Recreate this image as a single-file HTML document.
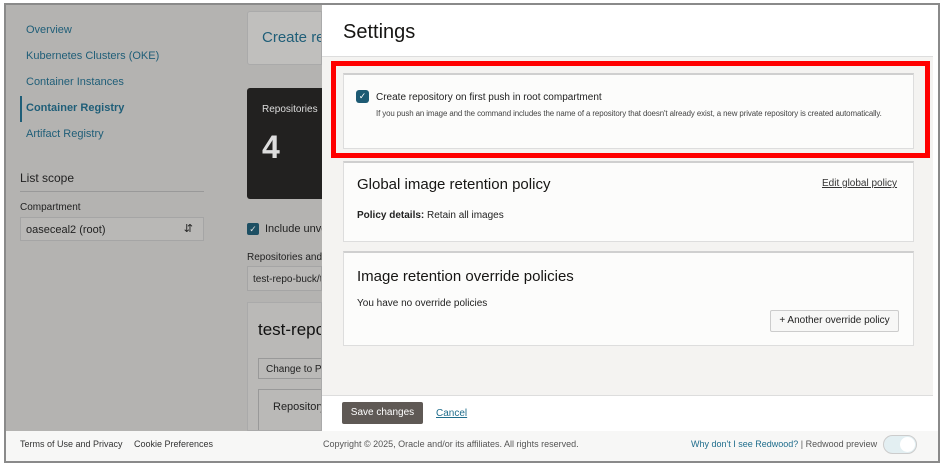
<!DOCTYPE html>
<html><head><style>
*{box-sizing:border-box;margin:0;padding:0}
body{width:942px;height:466px;background:#fff;font-family:"Liberation Sans",sans-serif;position:relative;overflow:hidden}
.frame{position:absolute;left:4px;top:3px;width:936px;height:460px;border:2px solid #8a8a8a}
.a{position:absolute}
.bg{left:6px;top:5px;width:316px;height:426px;background:#b4b3b1}
.nav{font-size:11px;color:#1f5e78}
.drawer{left:322px;top:5px;width:611px;height:426px;background:#f4f3f1}
.card{position:absolute;left:343px;width:571px;background:#fcfcfb;border:1px solid #ddd;border-top:2px solid #cfcfcf}
</style></head><body>
<div class="a bg"></div>
<div class="a nav" style="left:26px;top:24px">Overview</div>
<div class="a nav" style="left:26px;top:50px">Kubernetes Clusters (OKE)</div>
<div class="a nav" style="left:26px;top:76px">Container Instances</div>
<div class="a" style="left:20px;top:96px;width:2px;height:26px;background:#1f5e78"></div>
<div class="a nav" style="left:26px;top:102px;font-weight:bold">Container Registry</div>
<div class="a nav" style="left:26px;top:128px">Artifact Registry</div>
<div class="a" style="left:20px;top:171px;font-size:12px;color:#222">List scope</div>
<div class="a" style="left:20px;top:191px;width:184px;height:1px;background:#999"></div>
<div class="a" style="left:20px;top:202px;font-size:10px;color:#222">Compartment</div>
<div class="a" style="left:20px;top:217px;width:184px;height:24px;border:1px solid #a5a5a5;background:#b9b8b6;font-size:11px;color:#222;padding:6px 5px">oaseceal2 (root)<span style="position:absolute;right:10px;top:4px;font-size:11px">&#8693;</span></div>
<div class="a" style="left:247px;top:11px;width:75px;height:54px;background:#c0bfbd;border:1px solid #aaa;border-radius:3px 0 0 3px;font-size:15px;color:#1f5e78;padding:17px 0 0 14px;overflow:hidden;white-space:nowrap">Create re</div>
<div class="a" style="left:247px;top:88px;width:75px;height:111px;background:#222120;border-radius:3px 0 0 3px;color:#ddd;overflow:hidden;white-space:nowrap"><div style="font-size:10px;padding:16px 0 0 15px">Repositories</div><div style="font-size:32px;font-weight:bold;padding:14px 0 0 15px;color:#ddd">4</div></div>
<div class="a" style="left:247px;top:223px;width:12px;height:12px;background:#1d4f63;border-radius:2px;color:#ddd;font-size:9px;text-align:center;line-height:12px">&#10003;</div>
<div class="a" style="left:265px;top:223px;font-size:11px;color:#222;white-space:nowrap;width:57px;overflow:hidden">Include unverified</div>
<div class="a" style="left:247px;top:252px;font-size:10px;color:#222;width:75px;overflow:hidden;white-space:nowrap">Repositories and images</div>
<div class="a" style="left:247px;top:266px;width:75px;height:25px;border:1px solid #a5a5a5;background:#b9b8b6;font-size:10px;color:#222;padding:7px 0 0 5px;overflow:hidden;white-space:nowrap">test-repo-buck/test</div>
<div class="a" style="left:247px;top:302px;width:75px;height:129px;background:#bab9b7;border:1px solid #aaa;overflow:hidden;white-space:nowrap">
<div style="font-size:17px;color:#111;padding:17px 0 0 10px">test-repo</div>
<div style="position:absolute;left:10px;top:55px;width:70px;height:21px;border:1px solid #999;font-size:10px;padding:5px 0 0 7px;color:#222">Change to Public</div>
<div style="position:absolute;left:10px;top:86px;width:70px;height:50px;border:1px solid #999;font-size:11px;padding:11px 0 0 14px;color:#222">Repository</div>
</div>
<div class="a drawer"></div>
<div class="a" style="left:322px;top:5px;width:611px;height:52px;background:#fff;border-bottom:1px solid #ddd"></div>
<div class="a" style="left:343px;top:21px;font-size:20px;color:#161513">Settings</div>
<div class="a" style="left:331px;top:61px;width:599px;height:97px;border:5px solid #f00"></div>
<div class="card" style="top:73px;height:76px"></div>
<div class="a" style="left:356px;top:90px;width:13px;height:13px;background:#1d5a73;border-radius:3px;color:#fff;font-size:9px;text-align:center;line-height:13px">&#10003;</div>
<div class="a" style="left:376px;top:92px;font-size:10px;color:#222">Create repository on first push in root compartment</div>
<div class="a" style="left:376px;top:109px;font-size:7.9px;color:#444;white-space:nowrap;letter-spacing:-0.1px">If you push an image and the command includes the name of a repository that doesn't already exist, a new private repository is created automatically.</div>
<div class="card" style="top:161px;height:81px"></div>
<div class="a" style="left:357px;top:176px;font-size:15px;color:#161513">Global image retention policy</div>
<div class="a" style="left:822px;top:178px;font-size:10px;color:#333;text-decoration:underline">Edit global policy</div>
<div class="a" style="left:357px;top:210px;font-size:10px;color:#222"><b>Policy details:</b> Retain all images</div>
<div class="card" style="top:251px;height:95px"></div>
<div class="a" style="left:357px;top:268px;font-size:15px;color:#161513">Image retention override policies</div>
<div class="a" style="left:357px;top:298px;font-size:10px;color:#222">You have no override policies</div>
<div class="a" style="left:770px;top:310px;width:129px;height:22px;border:1px solid #ccc;border-radius:2px;background:#f7f7f6;font-size:10px;color:#222;text-align:center;line-height:20px">+ Another override policy</div>
<div class="a" style="left:322px;top:395px;width:611px;height:36px;background:#fff;border-top:1px solid #ddd"></div>
<div class="a" style="left:342px;top:402px;width:81px;height:22px;background:#5f5955;border-radius:2px;color:#fff;font-size:10px;text-align:center;line-height:22px">Save changes</div>
<div class="a" style="left:436px;top:408px;font-size:10px;color:#1f6d8c;text-decoration:underline">Cancel</div>
<div class="a" style="left:6px;top:431px;width:933px;height:30px;background:#f7f7f6"></div>
<div class="a" style="left:20px;top:439px;font-size:9px;color:#333">Terms of Use and Privacy</div>
<div class="a" style="left:134px;top:439px;font-size:9px;color:#333">Cookie Preferences</div>
<div class="a" style="left:323px;top:439px;font-size:9px;color:#555">Copyright © 2025, Oracle and/or its affiliates. All rights reserved.</div>
<div class="a" style="left:691px;top:439px;font-size:9px;color:#1f6d8c">Why don't I see Redwood? <span style="color:#555">| Redwood preview</span></div>
<div class="a" style="left:883px;top:435px;width:34px;height:19px;border:1px solid #ccc;background:#e3eff2;border-radius:10px"><div style="position:absolute;right:1px;top:1px;width:15px;height:15px;background:#fff;border-radius:50%"></div></div>
<div class="frame"></div>
</body></html>
